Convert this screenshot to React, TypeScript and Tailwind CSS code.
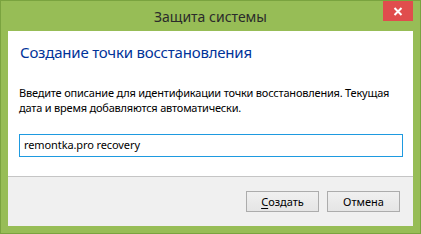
import React from "react";

const font = { fontFamily: '"Noto Sans", "Open Sans", sans-serif' };

export default function App() {
  return (
    <div
      className="w-[421px] h-[234px] border border-[#7aa33f] bg-[#97bd56] flex flex-col"
      style={font}
    >
      {/* title bar */}
      <div className="relative h-[30px] shrink-0 flex items-center justify-center">
        <span className="text-[14px] text-[#2b2b2b] leading-none pt-[1px]">Защита системы</span>
        <button className="absolute right-[7px] top-0 w-[30px] h-[20px] bg-[#e04d4d] flex items-center justify-center">
          <svg width="10" height="9" viewBox="0 0 10 9">
            <path d="M1.5 1 L8.5 8 M8.5 1 L1.5 8" stroke="#fff" strokeWidth="2" />
          </svg>
        </button>
      </div>

      {/* client */}
      <div className="mx-[7px] mb-[7px] flex-1 flex flex-col bg-white">
        <div className="h-[145px] flex flex-col">
          <h1 className="pl-[12px] pt-[11px] text-[15px] tracking-[-0.2px] leading-[20px] text-[#003399]">
            Создание точки восстановления
          </h1>
          <p className="pl-[11px] pr-[10px] mt-[23px] text-[11px] tracking-[-0.2px] leading-[15px] text-black whitespace-nowrap">
            Введите описание для идентификации точки восстановления. Текущая
            <br />
            дата и время добавляются автоматически.
          </p>
          <div className="ml-[11px] mr-[10px] mt-[19px] h-[23px] border border-[#1e9ae0] flex items-center px-[4px] text-[11px] tracking-[-0.1px] text-black">
            remontka.pro recovery
          </div>
        </div>
        <div className="h-px bg-[#c5c5c5]" />
        <div className="flex-1 bg-[#f0f0f0] flex justify-end items-start pt-[14px] pr-[13px] gap-[8px]">
          <button className="w-[73px] h-[21px] border border-[#acacac] bg-gradient-to-b from-[#f0f0f0] to-[#e5e5e5] text-[11px] text-black leading-none">
            <span className="underline underline-offset-2">С</span>оздать
          </button>
          <button className="w-[73px] h-[21px] border border-[#acacac] bg-gradient-to-b from-[#f0f0f0] to-[#e5e5e5] text-[11px] text-black leading-none">
            Отмена
          </button>
        </div>
      </div>
    </div>
  );
}
